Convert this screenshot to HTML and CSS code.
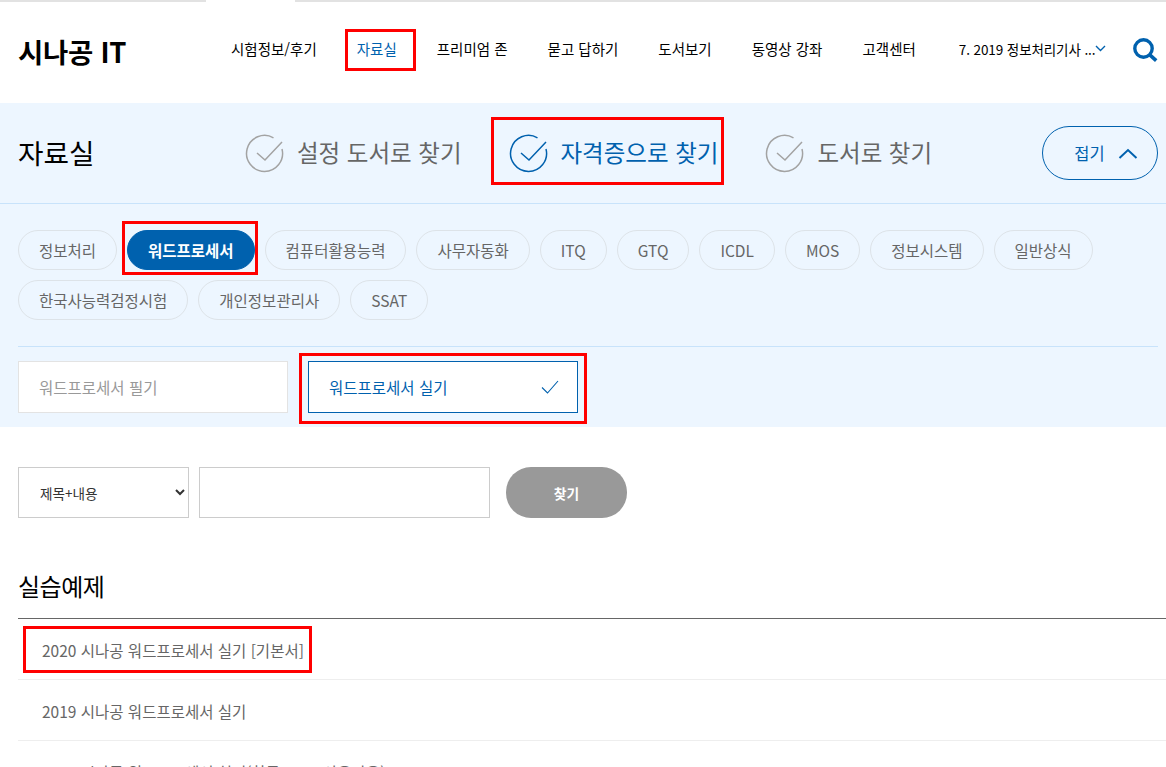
FILE: index.html
```html
<!DOCTYPE html>
<html lang="ko">
<head>
<meta charset="utf-8">
<title>자료실 - 시나공 IT</title>
<link rel="stylesheet" href="styles.css">
</head>
<body>
<div class="topstrip"><span class="strip-a"></span><span class="strip-b"></span></div>
<header class="header">
  <a class="logo">시나공 IT</a>
  <nav class="nav">
    <a class="nav-item">시험정보/후기</a>
    <a class="nav-item nav-active hl hl-nav">자료실</a>
    <a class="nav-item">프리미엄 존</a>
    <a class="nav-item">묻고 답하기</a>
    <a class="nav-item">도서보기</a>
    <a class="nav-item">동영상 강좌</a>
    <a class="nav-item">고객센터</a>
    <a class="nav-select"><span>7. 2019 정보처리기사 ...</span>
      <svg class="nav-chev" width="11" height="7" viewBox="0 0 11 7"><path d="M1 1l4.5 4.5L10 1" fill="none" stroke="#0061ae" stroke-width="1.4"/></svg>
    </a>
  </nav>
  <svg class="search-icon" width="25" height="24" viewBox="0 0 25 24"><circle cx="10.5" cy="10.5" r="8.7" fill="none" stroke="#0061ae" stroke-width="3.4"/><path d="M16.8 16.8l6.4 5.8" fill="none" stroke="#0061ae" stroke-width="3.6"/></svg>
</header>
<section class="band">
  <div class="band-head">
    <h2 class="band-title">자료실</h2>
    <div class="tabs">
      <a class="tab tab-1">
        <svg class="tab-icon" width="40" height="40" viewBox="0 0 40 40"><path d="M29.5 4.8A18 18 0 1 0 38 16" fill="none" stroke="#a3a3a3" stroke-width="1.5"/><path d="M13 20l8 7L38 9" fill="none" stroke="#a3a3a3" stroke-width="1.5"/></svg>
        <span>설정 도서로 찾기</span>
      </a>
      <a class="tab tab-2 tab-active hl hl-tab">
        <svg class="tab-icon" width="40" height="40" viewBox="0 0 40 40"><path d="M29.5 4.8A18 18 0 1 0 38 16" fill="none" stroke="#0061ae" stroke-width="1.5"/><path d="M13 20l8 7L38 9" fill="none" stroke="#0061ae" stroke-width="1.5"/></svg>
        <span>자격증으로 찾기</span>
      </a>
      <a class="tab tab-3">
        <svg class="tab-icon" width="40" height="40" viewBox="0 0 40 40"><path d="M29.5 4.8A18 18 0 1 0 38 16" fill="none" stroke="#a3a3a3" stroke-width="1.5"/><path d="M13 20l8 7L38 9" fill="none" stroke="#a3a3a3" stroke-width="1.5"/></svg>
        <span>도서로 찾기</span>
      </a>
    </div>
    <button class="fold">접기
      <svg width="20" height="11" viewBox="0 0 20 11"><path d="M1.5 10l8.5-8 8.500 8" fill="none" stroke="#0061ae" stroke-width="2"/></svg>
    </button>
  </div>
  <div class="band-body">
    <div class="pills">
      <a class="pill">정보처리</a>
      <a class="pill pill-active hl hl-pill">워드프로세서</a>
      <a class="pill">컴퓨터활용능력</a>
      <a class="pill">사무자동화</a>
      <a class="pill">ITQ</a>
      <a class="pill">GTQ</a>
      <a class="pill">ICDL</a>
      <a class="pill">MOS</a>
      <a class="pill">정보시스템</a>
      <a class="pill">일반상식</a>
      <a class="pill">한국사능력검정시험</a>
      <a class="pill">개인정보관리사</a>
      <a class="pill">SSAT</a>
    </div>
    <div class="subtabs">
      <a class="subtab">워드프로세서 필기</a>
      <a class="subtab subtab-active hl hl-sub">워드프로세서 실기
        <svg width="18" height="14" viewBox="0 0 18 14"><path d="M1 7.500l5.500 5.500L17 1" fill="none" stroke="#0061ae" stroke-width="1.1"/></svg>
      </a>
    </div>
  </div>
</section>
<form class="search">
  <select class="search-select"><option>제목+내용</option></select>
  <input class="search-input" type="text">
  <button class="search-btn" type="button">찾기</button>
</form>
<section class="list-wrap">
  <h3 class="list-title">실습예제</h3>
  <ul class="list">
    <li class="list-row"><a class="hl hl-row">2020 시나공 워드프로세서 실기 [기본서]</a></li>
    <li class="list-row"><a>2019 시나공 워드프로세서 실기</a></li>
    <li class="list-row"><a>2018 시나공 워드프로세서 실기(한글 2010 사용자용)</a></li>
  </ul>
</section>
</body>
</html>
```
FILE: styles.css
```css
* { box-sizing: border-box; }
html, body { margin: 0; height: 767px; overflow: hidden; background: #fff; }
body { font-family: "Noto Sans CJK KR", "Noto Sans", sans-serif; color: #000; }
a { color: inherit; text-decoration: none; }
h2, h3, ul { margin: 0; padding: 0; font-weight: 400; }
ul { list-style: none; }

.hl { position: relative; }
.hl::after { content: ""; position: absolute; border: 3px solid #f00; pointer-events: none; }
.hl-nav::after { left: -12px; right: -19px; top: -10px; bottom: -12px; }
.hl-tab::after { left: -17px; right: -6px; top: -15px; bottom: -10px; }
.hl-pill::after { left: -6px; right: -4px; top: -10px; bottom: -6px; }
.hl-sub::after { left: -10px; right: -10px; top: -9px; bottom: -12px; }
.hl-row::after { left: -19px; right: -8px; top: -14px; bottom: -13px; }

.topstrip { height: 2px; display: flex; }
.strip-a { width: 206px; background: #e2e2e2; }
.strip-b { margin-left: 89px; flex: 1; background: #e2e2e2; }

.header { height: 101px; display: flex; align-items: center; padding: 0 8px 4px 18px; }
.logo { font-size: 27.500px; font-weight: 700; letter-spacing: -0.3px; width: 213px; }
.nav { display: flex; align-items: center; gap: 40px; font-size: 14.500px; flex: 1; margin-bottom: 4px; }
.nav-item { display: block; line-height: 20px; white-space: nowrap; }
.nav-active { color: #0061ae; }
.nav-select { display: flex; align-items: center; gap: 0; margin-left: 3px; white-space: nowrap; font-size: 13.500px; letter-spacing: -0.1px; }
.nav-select span { line-height: 20px; }
.search-icon { flex: none; margin-bottom: 2px; }

.band { background: #edf6ff; height: 324px; }
.band-head { height: 101px; display: flex; align-items: center; padding: 0 8px 0 18px; border-bottom: 1px solid #c8e3fb; }
.band-title { font-size: 27.700px; width: 226px; line-height: 40px; padding-bottom: 3px; }
.tabs { display: flex; align-items: center; flex: 1; }
.tab { display: flex; align-items: center; gap: 13px; font-size: 23.500px; color: #666; line-height: 40px; white-space: nowrap; }
.tab span { padding-bottom: 3px; }
.tab-2 { margin-left: 46px; }
.tab-3 { margin-left: 46px; }
.tab-active { color: #0061ae; }
.tab-icon { flex: none; }
.fold { width: 116px; height: 54px; border: 1px solid #0061ae; border-radius: 27px; background: none; display: flex; align-items: center; justify-content: center; gap: 13px; font: 400 16.500px "Noto Sans CJK KR", sans-serif; color: #0061ae; padding: 0 0 0 12px; }

.band-body { padding: 26px 8px 0 18px; }
.pills { display: flex; flex-wrap: wrap; gap: 10px; height: 117px; align-content: flex-start; border-bottom: 1px solid #c8e3fb; }
.pill { height: 40px; line-height: 38px; padding: 0 20px; border: 1px solid #dde3e8; border-radius: 20px; font-size: 15.500px; color: #666; white-space: nowrap; }
.pill-active { background: #0061ae; border-color: #0061ae; color: #fff; font-weight: 700; }
.subtabs { display: flex; gap: 20px; margin-top: 14px; }
.subtab { width: 270px; height: 52px; background: #fff; border: 1px solid #e3e3e3; display: flex; align-items: center; justify-content: space-between; padding: 0 18px 0 20px; font-size: 15.500px; color: #999; }
.subtab-active { border-color: #0061ae; color: #0061ae; }

.search { display: flex; align-items: stretch; height: 51px; margin: 40px 0 0 18px; }
.search-select { width: 171px; border: 1px solid #ccc; background: #fff; padding: 0 0 0 17px; font: 400 13.600px "Noto Sans CJK KR", sans-serif; color: #333; border-radius: 0; }
.search-input { width: 291px; margin-left: 10px; border: 1px solid #ccc; background: #fff; }
.search-btn { width: 121px; margin-left: 16px; border: 0; border-radius: 25px; background: #999; color: #fff; font: 700 13.800px "Noto Sans CJK KR", sans-serif; }

.list-wrap { padding: 0 0 0 18px; margin-top: 50px; }
.list-title { font-size: 24px; line-height: 36px; margin-bottom: 14px; letter-spacing: -0.5px; }
.list { border-top: 1px solid #666; }
.list-row { height: 61px; border-bottom: 1px solid #eee; padding: 1px 0 0 24px; font-size: 15.500px; color: #666; display: flex; align-items: center; }
.list-row a { line-height: 20px; white-space: nowrap; }
```
